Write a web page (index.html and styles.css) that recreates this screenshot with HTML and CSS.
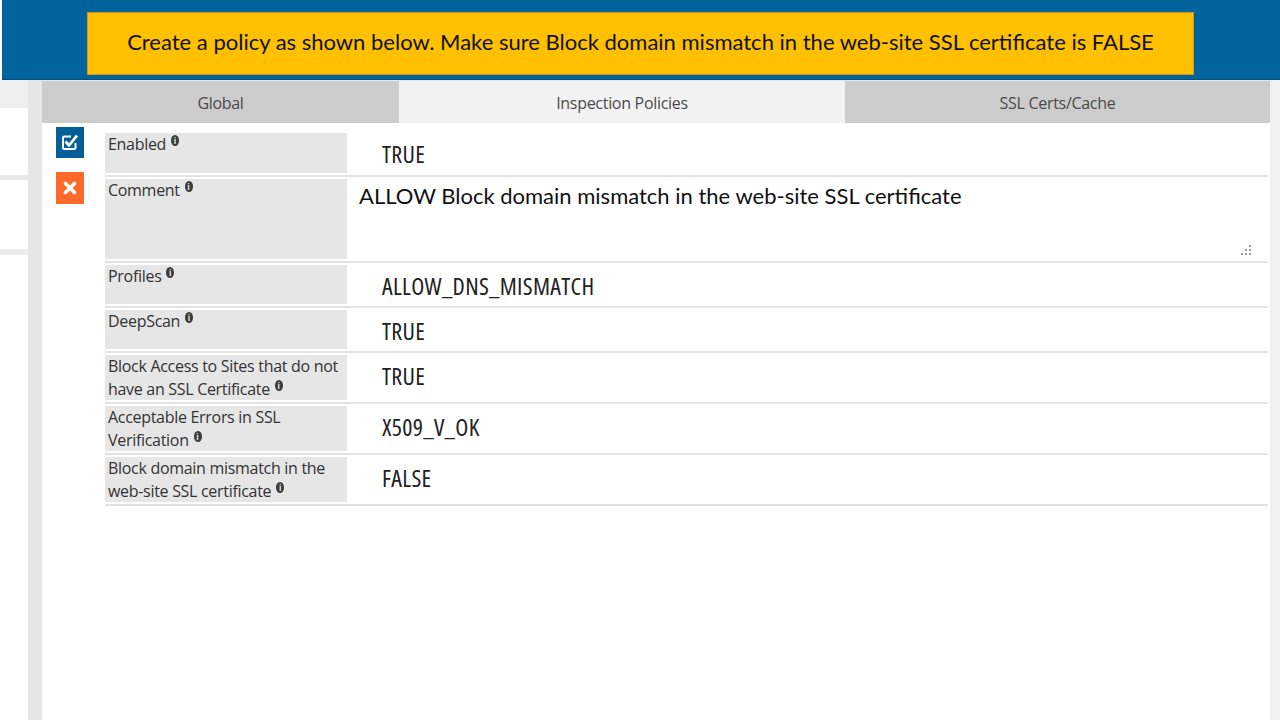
FILE: index.html
```html
<!DOCTYPE html>
<html lang="en">
<head>
<meta charset="utf-8">
<title>Inspection Policies</title>
<link rel="stylesheet" href="styles.css">
</head>
<body>
<header class="banner">
  <div class="note">Create a policy as shown below. Make sure Block domain mismatch in the web-site SSL certificate is FALSE</div>
</header>
<div class="workspace">
  <aside class="side">
    <div class="side-top"></div>
    <div class="side-card">
      <div class="side-item"></div>
      <div class="side-item"></div>
    </div>
  </aside>
  <div class="rail"></div>
  <main class="panel">
    <nav class="tabs">
      <div class="tab tab-global">Global</div>
      <div class="tab tab-insp active">Inspection Policies</div>
      <div class="tab tab-ssl">SSL Certs/Cache</div>
    </nav>
    <div class="content">
      <div class="actions">
        <div class="act act-ok">
          <svg width="28" height="31" viewBox="0 0 28 31">
            <path d="M15 9.5H8.5Q7 9.5 7 11V20.5Q7 22 8.5 22H18Q19.5 22 19.5 20.5V16" fill="none" stroke="#fff" stroke-width="2"/>
            <path d="M9.5 14.5L13 18.5L21 8.5" fill="none" stroke="#fff" stroke-width="2.8" stroke-linejoin="round"/>
          </svg>
        </div>
        <div class="act act-cancel">
          <svg width="28" height="32" viewBox="0 0 28 32">
            <path d="M9.5 11.5L18.5 20.5M18.5 11.5L9.5 20.5" stroke="#fff" stroke-width="3.6" stroke-linecap="round"/>
          </svg>
        </div>
      </div>
      <div class="form">
        <div class="row h40">
          <div class="label">Enabled <span class="info">i</span></div>
          <div class="value">TRUE</div>
        </div>
        <div class="row h80">
          <div class="label">Comment <span class="info">i</span></div>
          <div class="value comment">ALLOW Block domain mismatch in the web-site SSL certificate
            <svg class="grip" width="12" height="12" viewBox="0 0 12 12">
              <g fill="#9a9a9a">
                <rect x="9" y="1" width="2" height="2"/>
                <rect x="5" y="5" width="2" height="2"/><rect x="9" y="5" width="2" height="2"/>
                <rect x="1" y="9" width="2" height="2"/><rect x="5" y="9" width="2" height="2"/><rect x="9" y="9" width="2" height="2"/>
              </g>
            </svg>
          </div>
        </div>
        <div class="row h39">
          <div class="label">Profiles <span class="info">i</span></div>
          <div class="value">ALLOW_DNS_MISMATCH</div>
        </div>
        <div class="row h39">
          <div class="label">DeepScan <span class="info">i</span></div>
          <div class="value">TRUE</div>
        </div>
        <div class="row h45">
          <div class="label">Block Access to Sites that do not have an SSL Certificate <span class="info">i</span></div>
          <div class="value">TRUE</div>
        </div>
        <div class="row h45">
          <div class="label">Acceptable Errors in SSL Verification <span class="info">i</span></div>
          <div class="value">X509_V_OK</div>
        </div>
        <div class="row h45">
          <div class="label">Block domain mismatch in the web-site SSL certificate <span class="info">i</span></div>
          <div class="value">FALSE</div>
        </div>
      </div>
    </div>
  </main>
  <div class="gutter"></div>
</div>
</body>
</html>
```
FILE: styles.css
```css
* { box-sizing: border-box; }
html, body {
  margin: 0;
  padding: 0;
  width: 1280px;
  height: 720px;
  overflow: hidden;
  background: #ffffff;
}
body {
  font-family: "Open Sans", "Noto Sans", sans-serif;
}

/* Banner */
.banner {
  height: 80px;
  margin-left: 2px;
  background: #02649c;
  border-bottom: 1px solid #0b4f78;
  padding: 12px 86px 4px 85px;
  display: flex;
}
.note {
  flex: 1;
  background: #ffc000;
  border: 1px solid #e0901c;
  display: flex;
  align-items: center;
  justify-content: center;
  font-family: "Lato", "Open Sans", sans-serif;
  font-size: 22px;
  color: #111;
  padding-bottom: 4px;
}

/* Workspace */
.workspace {
  display: flex;
  height: 640px;
}
.side {
  width: 28px;
  background: #ffffff;
  display: flex;
  flex-direction: column;
}
.side-top {
  height: 28px;
  background: #efefef;
}
.side-card {
  display: flex;
  flex-direction: column;
}
.side-item {
  height: 72px;
  background: #ffffff;
  border-bottom: 5px solid #e9e9e9;
}
.side-item + .side-item {
  height: 75px;
  border-bottom: 6px solid #ececec;
}
.rail {
  width: 14px;
  background: #e6e6e6;
}
.gutter {
  width: 10px;
  background: #f0f0f0;
}
.panel {
  width: 1228px;
  background: #ffffff;
  display: flex;
  flex-direction: column;
}

/* Tabs */
.tabs {
  display: flex;
  height: 43px;
  border-top: 1px solid #e8e8e8;
}
.tab {
  display: flex;
  align-items: center;
  justify-content: center;
  background: #cccccc;
  color: #4a4a4a;
  font-size: 16px;
  letter-spacing: -0.3px;
  padding-top: 1px;
}
.tab-global { width: 357px; }
.tab-insp { width: 446px; }
.tab-ssl { width: 425px; }
.tab.active { background: #f2f2f2; }

/* Content */
.content {
  display: flex;
  padding-top: 4px;
}
.actions {
  width: 63px;
  padding-left: 14px;
  display: flex;
  flex-direction: column;
  gap: 14px;
}
.act {
  width: 28px;
  display: flex;
}
.act-ok { height: 31px; background: #045e98; }
.act-cancel { height: 32px; background: #ff6a2b; }

.form {
  width: 1163px;
  padding-top: 6px;
  display: flex;
  flex-direction: column;
}
.row {
  display: flex;
  padding-bottom: 2px;
  border-bottom: 2px solid #e3e3e3;
  margin-bottom: 2px;
}
.h39 .label, .h39 .value { height: 39px; }
.h40 .label, .h40 .value { height: 40px; }
.h80 .label, .h80 .value { height: 80px; }
.h45 .label, .h45 .value { height: 45px; }

.label {
  width: 242px;
  background: #e6e6e6;
  color: #333333;
  font-size: 16px;
  letter-spacing: -0.3px;
  line-height: 23px;
  padding: 0 4px 0 3px;
}
.info {
  display: inline-block;
  width: 8px;
  height: 11px;
  border-radius: 50%;
  background: #3c3c3c;
  color: #e6e6e6;
  font-size: 8px;
  line-height: 11px;
  text-align: center;
  font-weight: bold;
  letter-spacing: 0;
  vertical-align: 6px;
  margin-left: 1px;
}
.value {
  flex: 1;
  padding-left: 35px;
  padding-top: 5px;
  font-size: 24px;
  line-height: 32px;
  font-stretch: 75%;
  letter-spacing: 0.3px;
  color: #222222;
}
.value.comment {
  position: relative;
  padding-left: 12px;
  padding-top: 3px;
  font-family: "Lato", "Open Sans", sans-serif;
  font-size: 22px;
  line-height: normal;
  font-stretch: normal;
  letter-spacing: 0;
  color: #111;
}
.grip {
  position: absolute;
  right: 16px;
  bottom: 3px;
}
```
